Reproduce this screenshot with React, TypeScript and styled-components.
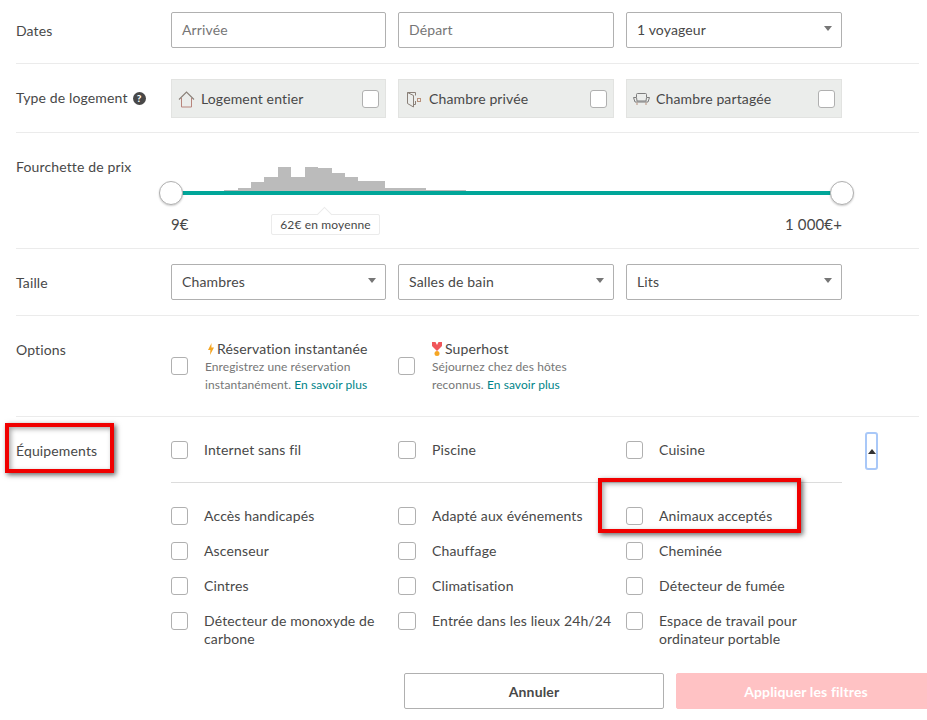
import React from "react";
import styled, { createGlobalStyle } from "styled-components";

const GlobalStyle = createGlobalStyle`
  html, body {
    margin: 0;
    padding: 0;
    background: #fff;
    overflow: hidden;
  }
  body {
    font-family: Lato, "Noto Sans", sans-serif;
    font-size: 14px;
    letter-spacing: 0.14px;
    color: #484848;
  }
`;

const Page = styled.div`
  position: relative;
  width: 927px;
  height: 720px;
  overflow: hidden;
  box-sizing: border-box;
  padding-left: 16px;
`;

const Row = styled.div<{ $top?: number; $bottom?: number; $plain?: boolean }>`
  display: flex;
  align-items: flex-start;
  width: 903px;
  box-sizing: border-box;
  padding-top: ${(p) => p.$top ?? 15}px;
  padding-bottom: ${(p) => p.$bottom ?? 15}px;
  border-bottom: ${(p) => (p.$plain ? "none" : "1px solid #ebebeb")};
`;

const Label = styled.div`
  display: flex;
  align-items: center;
  gap: 5px;
  width: 155px;
  flex: none;
  padding-top: 10px;
  font-size: 14px;
  line-height: 18px;
`;

const Help = styled.span`
  display: inline-flex;
  align-items: center;
  justify-content: center;
  width: 13px;
  height: 13px;
  border-radius: 50%;
  background: #484848;
  color: #fff;
  font-size: 10px;
  font-weight: 900;
  line-height: 1;
`;

const Columns = styled.div`
  display: grid;
  grid-template-columns: 215px 216px 216px;
  column-gap: 12px;
  width: 671px;
  flex: none;
`;

const Field = styled.div<{ $placeholder?: boolean }>`
  box-sizing: border-box;
  height: 36px;
  padding: 0 10px 2px;
  display: flex;
  align-items: center;
  background: #fff;
  border: 1px solid #b0b0b0;
  border-radius: 2px;
  font-size: 14px;
  color: ${(p) => (p.$placeholder ? "#767676" : "#484848")};
`;

const Select = styled(Field)`
  justify-content: space-between;
  &::after {
    content: "";
    margin-right: -1px;
    border-left: 4.5px solid transparent;
    border-right: 4.5px solid transparent;
    border-top: 5px solid #767676;
    transform: translateY(-1px);
  }
`;

const Tile = styled.div`
  box-sizing: border-box;
  height: 39px;
  display: flex;
  align-items: center;
  gap: 6px;
  padding: 0 6px;
  background: #ebedeb;
  border: 1px solid #e2e3e1;
  font-size: 14px;
`;

const TileText = styled.span`
  flex: 1;
`;

const Box = styled.span`
  display: block;
  flex: none;
  box-sizing: border-box;
  width: 17px;
  height: 18px;
  background: #fff;
  border: 1px solid #b0b0b0;
  border-radius: 3px;
`;

const Slider = styled.div`
  position: relative;
  width: 671px;
  flex: none;
  padding-top: 19px;
`;

const Histogram = styled.div`
  display: flex;
  align-items: flex-end;
  height: 24px;
  padding-left: 53px;
`;

const Bar = styled.div<{ $w: number; $h: number }>`
  width: ${(p) => p.$w}px;
  height: ${(p) => p.$h}px;
  background: #bbb;
`;

const Track = styled.div`
  position: relative;
  height: 4px;
  background: #00a699;
`;

const Handle = styled.span<{ $side: "left" | "right" }>`
  position: absolute;
  top: -10px;
  ${(p) => p.$side}: -12px;
  width: 24px;
  height: 24px;
  box-sizing: border-box;
  background: #fff;
  border: 1px solid #b0b0b0;
  border-radius: 50%;
  box-shadow: 0 1px 2px rgba(0, 0, 0, 0.2);
`;

const Scale = styled.div`
  display: flex;
  justify-content: space-between;
  align-items: flex-start;
  padding-top: 20px;
  padding-bottom: 1px;
  font-size: 15px;
  line-height: 18px;
`;

const Tip = styled.div`
  position: absolute;
  left: 100px;
  top: 66px;
  width: 109px;
  height: 21px;
  box-sizing: border-box;
  display: flex;
  align-items: center;
  justify-content: center;
  background: #fff;
  border: 1px solid #ebebeb;
  border-radius: 2px;
  font-size: 12px;

  &::before {
    content: "";
    position: absolute;
    left: 47px;
    top: -6px;
    width: 10px;
    height: 10px;
    background: #fff;
    border-left: 1px solid #ebebeb;
    border-top: 1px solid #ebebeb;
    transform: rotate(45deg);
  }
`;

const Option = styled.div`
  display: flex;
  align-items: center;
  gap: 17px;
`;

const OptionTitle = styled.div`
  display: flex;
  align-items: center;
  height: 18px;
  font-size: 14px;
  line-height: 18px;
`;

const OptionText = styled.div`
  padding-top: 9px;
  padding-bottom: 7px;
`;

const OptionSub = styled.div`
  font-size: 12px;
  line-height: 18px;
  letter-spacing: 0.08px;
  color: #767676;
  white-space: nowrap;
`;

const Link = styled.a`
  color: #008489;
`;

const Amenities = styled.div`
  width: 671px;
  flex: none;
`;

const Amenity = styled.div`
  display: flex;
  align-items: flex-start;
  gap: 16px;
  font-size: 14px;
  line-height: 18px;

  &:nth-child(3n + 2) ${Box} {
    width: 18px;
  }
`;

const AmenityGrid = styled.div<{ $divided?: boolean }>`
  display: grid;
  grid-template-columns: 215px 216px 216px;
  column-gap: 12px;
  row-gap: 17px;
  padding-top: ${(p) => (p.$divided ? 9 : 24)}px;
  padding-bottom: ${(p) => (p.$divided ? 23 : 0)}px;
  border-bottom: ${(p) => (p.$divided ? "1px solid #dcdcdc" : "none")};
`;

const Toggle = styled.div`
  width: 13px;
  height: 38px;
  margin-left: 23px;
  flex: none;
  box-sizing: border-box;
  display: flex;
  align-items: center;
  justify-content: center;
  border: 2px solid #a9c8f8;
  border-radius: 3px;
  &::after {
    content: "";
    border-left: 4px solid transparent;
    border-right: 4px solid transparent;
    border-bottom: 5px solid #333;
  }
`;

const Footer = styled.div`
  display: flex;
  gap: 12px;
  margin-top: 25px;
  margin-left: 388px;
  width: 560px;
`;

const Button = styled.div<{ $primary?: boolean }>`
  width: 260px;
  height: 36px;
  flex: none;
  box-sizing: border-box;
  display: flex;
  align-items: center;
  justify-content: center;
  border-radius: 2px;
  font-size: 14px;
  font-weight: 700;
  background: ${(p) => (p.$primary ? "#ffc2c4" : "#fff")};
  border: 1px solid ${(p) => (p.$primary ? "#ffc2c4" : "#b0b0b0")};
  color: ${(p) => (p.$primary ? "#fff" : "#484848")};
`;

const Highlight = styled.div<{ $x: number; $y: number; $w: number; $h: number }>`
  position: absolute;
  left: ${(p) => p.$x}px;
  top: ${(p) => p.$y}px;
  width: ${(p) => p.$w}px;
  height: ${(p) => p.$h}px;
  box-sizing: border-box;
  border: 4px solid #f00000;
  box-shadow: 2px 2px 5px rgba(0, 0, 0, 0.6), inset 2px 2px 5px rgba(0, 0, 0, 0.35);
`;

const BoltSvg = styled.svg`
  flex: none;
  margin: 0 3px;
`;

const MedalSvg = styled.svg`
  flex: none;
  margin-right: 3px;
`;

const HouseIcon = () => (
  <svg width="17" height="18" viewBox="0 0 17 18" fill="none">
    <path d="M1 9.5 8.5 2 16 9.5" stroke="#8a8078" strokeWidth="1.1" />
    <path d="M3.5 8v9h10V8" stroke="#b8857c" />
  </svg>
);

const DoorIcon = () => (
  <svg width="18" height="18" viewBox="0 0 18 18" fill="none">
    <path d="M2.5 2.5h8v3M2.5 2.5v11l6 3.5V5.5l-6-3Z" stroke="#8a8078" />
    <path d="M8.5 14.5h2V11" stroke="#8a8078" />
    <rect x="12.5" y="8.5" width="3" height="3" stroke="#b8917c" />
  </svg>
);

const SofaIcon = () => (
  <svg width="17" height="14" viewBox="1 0 17 14" fill="none" overflow="visible">
    <path d="M4.5 5V2.5q0-1 1-1h8q1 0 1 1V5" stroke="#7d7d7d" />
    <path d="M1.5 5.5h3L5 9h9l.5-3.5h3l-1.5 4.5h-13L1.5 5.5Z" stroke="#7d7d7d" />
    <path d="M5 10.5v2.5M14 10.5v2.5" stroke="#b8917c" />
  </svg>
);

const BoltIcon = () => (
  <BoltSvg width="6" height="12" viewBox="0 0 6 12">
    <path d="M3.5 0 0 7h2.4L2 12l4-7.5H3.4Z" fill="#f5a623" />
  </BoltSvg>
);

const MedalIcon = () => (
  <MedalSvg width="10" height="14" viewBox="0 0 10 14">
    <path d="M0 0h3.5L5 3l1.5-3H10L10 4 5 9 0 4Z" fill="#f0565a" />
    <circle cx="5" cy="11.5" r="2.5" fill="#f5a623" />
  </MedalSvg>
);

const bars: [number, number][] = [
  [14, 1], [13, 3], [13, 9], [14, 14], [13, 24], [14, 14], [13, 24],
  [14, 23], [13, 18], [13, 14], [27, 10], [41, 3], [40, 1],
];

const firstAmenities = ["Internet sans fil", "Piscine", "Cuisine"];
const moreAmenities = [
  "Accès handicapés",
  "Adapté aux événements",
  "Animaux acceptés",
  "Ascenseur",
  "Chauffage",
  "Cheminée",
  "Cintres",
  "Climatisation",
  "Détecteur de fumée",
  "Détecteur de monoxyde de carbone",
  "Entrée dans les lieux 24h/24",
  "Espace de travail pour ordinateur portable",
];

const App = () => (
  <Page>
    <GlobalStyle />
    <Row $top={12}>
      <Label>Dates</Label>
      <Columns>
        <Field $placeholder>Arrivée</Field>
        <Field $placeholder>Départ</Field>
        <Select>1 voyageur</Select>
      </Columns>
    </Row>
    <Row $bottom={14}>
      <Label>
        Type de logement <Help>?</Help>
      </Label>
      <Columns>
        <Tile>
          <HouseIcon />
          <TileText>Logement entier</TileText>
          <Box />
        </Tile>
        <Tile>
          <DoorIcon />
          <TileText>Chambre privée</TileText>
          <Box />
        </Tile>
        <Tile>
          <SofaIcon />
          <TileText>Chambre partagée</TileText>
          <Box />
        </Tile>
      </Columns>
    </Row>
    <Row $bottom={14}>
      <Label>Fourchette de prix</Label>
      <Slider>
        <Histogram>
          {bars.map(([w, h], i) => (
            <Bar key={i} $w={w} $h={h} />
          ))}
        </Histogram>
        <Track>
          <Handle $side="left" />
          <Handle $side="right" />
        </Track>
        <Scale>
          <span>9€</span>
          <span>1 000€+</span>
        </Scale>
        <Tip>62€ en moyenne</Tip>
      </Slider>
    </Row>
    <Row>
      <Label>Taille</Label>
      <Columns>
        <Select>Chambres</Select>
        <Select>Salles de bain</Select>
        <Select>Lits</Select>
      </Columns>
    </Row>
    <Row>
      <Label>Options</Label>
      <Columns>
        <Option>
          <Box />
          <OptionText>
            <OptionTitle>
              <BoltIcon />
              Réservation instantanée
            </OptionTitle>
            <OptionSub>Enregistrez une réservation</OptionSub>
            <OptionSub>
              instantanément. <Link>En savoir plus</Link>
            </OptionSub>
          </OptionText>
        </Option>
        <Option>
          <Box />
          <OptionText>
            <OptionTitle>
              <MedalIcon />
              Superhost
            </OptionTitle>
            <OptionSub>Séjournez chez des hôtes</OptionSub>
            <OptionSub>
              reconnus. <Link>En savoir plus</Link>
            </OptionSub>
          </OptionText>
        </Option>
      </Columns>
    </Row>
    <Row $plain $bottom={0}>
      <Label>Équipements</Label>
      <Amenities>
        <AmenityGrid $divided>
          {firstAmenities.map((name) => (
            <Amenity key={name}>
              <Box />
              <span>{name}</span>
            </Amenity>
          ))}
        </AmenityGrid>
        <AmenityGrid>
          {moreAmenities.map((name) => (
            <Amenity key={name}>
              <Box />
              <span>{name}</span>
            </Amenity>
          ))}
        </AmenityGrid>
      </Amenities>
      <Toggle />
    </Row>
    <Footer>
      <Button>Annuler</Button>
      <Button $primary>Appliquer les filtres</Button>
    </Footer>
    <Highlight $x={5} $y={423} $w={109} $h={50} />
    <Highlight $x={598} $y={478} $w={203} $h={55} />
  </Page>
);

export default App;
